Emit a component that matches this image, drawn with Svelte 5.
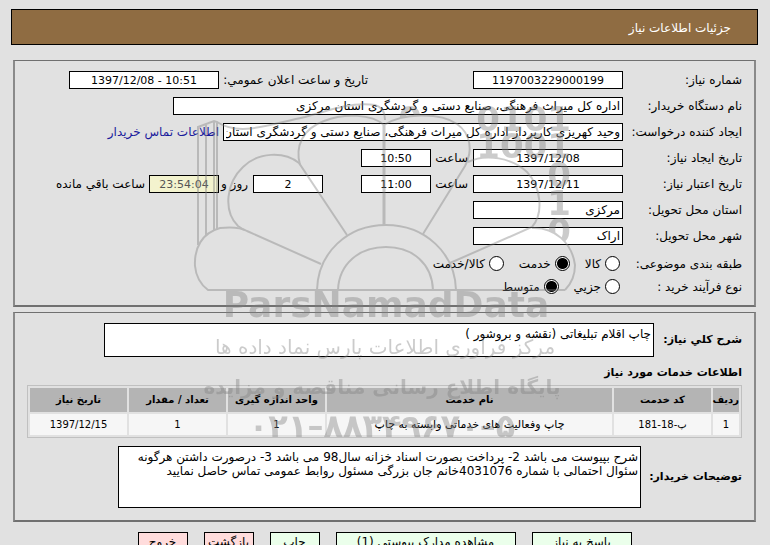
<script>
  const services = [
    { row: '1', code: 'پ-18-181', name: 'چاپ وفعاليت هاى خدماتى وابسته به چاپ', unit: '1', count: '1', date: '1397/12/15' }
  ];
  const actions = [
    { text: 'پاسخ به نیاز', size: 'wide', tone: 'go' },
    { text: 'مشاهده مدارک پیوستی (1)', size: 'widest', tone: 'go' },
    { text: 'چاپ', size: 'small', tone: 'go' },
    { text: 'بازگشت', size: 'small', tone: 'stop' },
    { text: 'خروج', size: 'small', tone: 'stop' }
  ];
  const description = 'چاپ اقلام تبلیغاتی (نقشه و بروشور )';
  const notes =
    'شرح بپیوست می باشد 2- پرداخت بصورت اسناد خزانه سال98 می باشد 3- درصورت داشتن هرگونه سئوال احتمالی با شماره 4031076خانم جان بزرگی مسئول روابط عمومی تماس حاصل نمایید';
  let category = $state('service');
  let process = $state('medium');
</script>

<main dir="rtl" lang="fa">
  <h1>جزئیات اطلاعات نیاز</h1>

  <fieldset class="details">
    <div class="row">
      <label class="name" for="number">شماره نیاز:</label>
      <input id="number" class="mid code" value="1197003229000199" readonly />
      <label class="announce" for="announced">تاریخ و ساعت اعلان عمومي:</label>
      <input id="announced" class="mid code" dir="ltr" value="1397/12/08 - 10:51" readonly />
    </div>
    <div class="row">
      <label class="name" for="buyer">نام دستگاه خریدار:</label>
      <input id="buyer" class="longest" value="اداره کل میراث فرهنگی، صنایع دستی و گردشگری استان مرکزی" readonly />
    </div>
    <div class="row">
      <label class="name" for="creator">ایجاد کننده درخواست:</label>
      <input id="creator" class="long" value="وحید کهریزی کارپرداز اداره کل میراث فرهنگی، صنایع دستی و گردشگری استان" readonly />
      <a href="#contact">اطلاعات تماس خریدار</a>
    </div>
    <div class="row">
      <label class="name" for="created">تاریخ ایجاد نیاز:</label>
      <input id="created" class="mid code" value="1397/12/08" readonly />
      <label class="hour" for="created-hour">ساعت</label>
      <input id="created-hour" class="short code" value="10:50" readonly />
    </div>
    <div class="row">
      <label class="name" for="valid">تاریخ اعتبار نیاز:</label>
      <input id="valid" class="mid code" value="1397/12/11" readonly />
      <label class="hour" for="valid-hour">ساعت</label>
      <input id="valid-hour" class="short code" value="11:00" readonly />
      <input id="days" class="short code days" value="2" readonly />
      <label class="day" for="days">روز و</label>
      <input id="remaining" class="short code countdown" value="23:54:04" readonly />
      <label for="remaining">ساعت باقي مانده</label>
    </div>
    <div class="row">
      <label class="name" for="province">استان محل تحویل:</label>
      <input id="province" class="mid" value="مرکزی" readonly />
    </div>
    <div class="row">
      <label class="name" for="city">شهر محل تحویل:</label>
      <input id="city" class="mid" value="اراک" readonly />
    </div>
    <div class="choices" role="radiogroup" aria-labelledby="category">
      <span class="name" id="category">طبقه بندی موضوعی:</span>
      <label><input type="radio" value="goods" bind:group={category} />کالا</label>
      <label><input type="radio" value="service" bind:group={category} />خدمت</label>
      <label><input type="radio" value="both" bind:group={category} />کالا/خدمت</label>
    </div>
    <div class="choices" role="radiogroup" aria-labelledby="process">
      <span class="name" id="process">نوع فرآیند خرید :</span>
      <label><input type="radio" value="small" bind:group={process} />جزیي</label>
      <label><input type="radio" value="medium" bind:group={process} />متوسط</label>
    </div>
  </fieldset>

  <fieldset class="request">
    <div class="area">
      <label class="summary" for="description">شرح کلي نیاز:</label>
      <textarea id="description" readonly value={description}></textarea>
    </div>
    <h2>اطلاعات خدمات مورد نیاز</h2>
    <table>
      <thead>
        <tr>
          <th class="c-row">ردیف</th>
          <th class="c-std">کد خدمت</th>
          <th>نام خدمت</th>
          <th class="c-std">واحد اندازه گیری</th>
          <th class="c-std">تعداد / مقدار</th>
          <th class="c-std">تاریخ نیاز</th>
        </tr>
      </thead>
      <tbody>
        {#each services as s}
          <tr>
            <td>{s.row}</td>
            <td>{s.code}</td>
            <td class="service">{s.name}</td>
            <td>{s.unit}</td>
            <td>{s.count}</td>
            <td>{s.date}</td>
          </tr>
        {/each}
      </tbody>
    </table>
    <div class="area">
      <label class="remarks" for="notes">توضیحات خریدار:</label>
      <textarea id="notes" class="tall" readonly value={notes}></textarea>
    </div>
  </fieldset>

  <div class="actions">
    {#each actions as a}
      <button type="button" class="{a.size} {a.tone}">{a.text}</button>
    {/each}
  </div>

  <svg class="watermark" viewBox="185 90 400 360" direction="ltr" aria-hidden="true">
    <mask id="behind-petals" maskUnits="userSpaceOnUse" x="185" y="90" width="400" height="360">
      <rect x="185" y="90" width="400" height="360" fill="#fff" />
      <path
        fill="#000"
        d="M384 290V125C402 113 440 112 457 124C471 134 473 151 465 166C486 153 512 158 527 172C541 187 544 213 532 228C555 227 572 243 575 265C576 276 571 284 565 290ZM384 125C372 114 344 113 324 121L300 165V290H384Z"
      />
    </mask>
    <g class="digits" mask="url(#behind-petals)">
      <text x="422" y="131">0</text>
      <text x="571" y="131">0101</text>
      <text x="571" y="158">1001</text>
      <text x="571" y="187">0</text>
      <text x="571" y="215">1</text>
      <text x="571" y="243">0</text>
    </g>
    <g class="lines">
      <path d="M198 245V127L214 121L217 122V230M206 236V124M214 231V121M217 122C240 137 270 124 305 117C335 108 355 102 375 105C382 107 385 113 385 120" />
      <path d="M321 264L247 231C240 227 230 227 220 228C202 233 194 248 195 266C196 277 200 284 208 290H565" />
      <path d="M347 235L299 163C284 151 258 152 243 167C226 183 223 211 238 226L244 230" />
      <path class="spine" d="M384 225V124" />
      <path d="M384 125C372 114 344 113 324 121C302 129 295 147 300 165" />
      <path d="M384 125C402 113 440 112 457 124C471 134 473 151 465 166L423 234" />
      <path d="M468 162C486 153 512 158 527 172C541 187 544 213 532 227L450 263" />
      <path d="M532 228C555 227 572 243 575 265C575 276 571 284 565 290" />
      <path d="M317 290C318 253 347 225 386 225C425 225 455 253 456 290M338 290C339 264 359 247 386 247C413 247 432 264 433 290" />
    </g>
    <text class="brand" x="386" y="317">ParsNamadData</text>
    <text class="script" x="385" y="354">مرکز فرآوری اطلاعات پارس نماد داده ها</text>
    <text class="tagline" x="382" y="394">پایگاه اطلاع رسانی مناقصه و مزایده</text>
    <text class="phone" x="382" y="437">۰۲۱–۸۸۳۴۹۶۷۰–۵</text>
  </svg>
</main>

<style>
  :global(html) {
    background: #e1e1e1;
    scrollbar-width: none;
  }
  :global(body) {
    margin: 0;
  }
  main,
  input,
  textarea,
  button {
    font-family: 'DejaVu Sans', Tahoma, sans-serif;
    font-size: 12px;
    line-height: 14px;
    color: #000;
  }
  main {
    position: relative;
    padding: 9px 12px 12px 11px;
    overflow: hidden;
  }
  h1 {
    margin: 0 0 15px;
    padding: 11px 26px 9px;
    border: 1px solid #000;
    background: #8f6c42;
    color: #fff;
    font-size: 12px;
    font-weight: normal;
    line-height: 14px;
  }
  fieldset {
    margin: 0 2px 5px;
    padding: 0 12px;
    min-width: 0;
    border: 2px solid;
    border-color: #707070 #8a8a8a #707070 #8a8a8a;
    border-width: 1px 2px 2px;
  }
  .details {
    padding-top: 10px;
    padding-bottom: 3px;
  }
  .row,
  .choices {
    display: flex;
    align-items: center;
    margin-bottom: 8px;
    white-space: nowrap;
  }
  .row {
    height: 18px;
  }
  .name {
    width: 119px;
    flex: none;
  }
  input {
    box-sizing: border-box;
    height: 18px;
    margin: 0;
    padding: 0 2px;
    border: 1px solid #000;
    border-radius: 0;
    background: #fff;
    flex: none;
  }
  .code {
    font-size: 11px;
    text-align: center;
    direction: ltr;
  }
  .short {
    width: 70px;
  }
  .mid {
    width: 150px;
  }
  .long {
    width: 400px;
  }
  .longest {
    width: 450px;
  }
  .announce {
    box-sizing: border-box;
    width: 254px;
    padding-right: 105px;
  }
  .hour {
    box-sizing: border-box;
    width: 42px;
    padding-right: 5px;
  }
  .days {
    margin-right: 38px;
  }
  .day {
    box-sizing: border-box;
    width: 34px;
    padding-right: 5px;
  }
  .countdown {
    margin-left: 4px;
    background: #f3f3ce;
    color: #555;
  }
  a {
    margin-right: 4px;
    color: #1a1a9c;
    text-decoration: none;
  }
  .choices {
    height: 15px;
  }
  .row + .choices {
    margin-top: 11px;
  }
  .choices label {
    display: flex;
    align-items: center;
    gap: 4px;
    margin-right: 3px;
    margin-left: 12px;
  }
  input[type='radio'] {
    appearance: none;
    width: 15px;
    height: 15px;
    padding: 0;
    border-radius: 50%;
  }
  input[type='radio']:checked {
    background: radial-gradient(circle, #000 5px, #fff 6px);
  }
  .request {
    padding-top: 10px;
    padding-bottom: 12px;
  }
  .area {
    display: flex;
    align-items: center;
    font-size: 11px;
    font-weight: bold;
  }
  .area label {
    flex: none;
    white-space: nowrap;
  }
  .summary {
    width: 88px;
  }
  .remarks {
    width: 101px;
  }
  textarea {
    box-sizing: border-box;
    width: 550px;
    height: 34px;
    margin: 0;
    padding: 3px 2px;
    border: 1px solid #000;
    border-radius: 0;
    background: #fff;
    resize: none;
    overflow: hidden;
  }
  textarea.tall {
    width: 523px;
    height: 62px;
  }
  h2 {
    margin: 9px 0 5px;
    font-size: 11px;
    line-height: 14px;
  }
  table {
    width: 100%;
    table-layout: fixed;
    margin-bottom: 8px;
    border: 1px solid #c0c0c0;
    border-spacing: 2px;
    font-size: 10px;
    line-height: 14px;
    text-align: center;
  }
  th {
    height: 24px;
    padding: 0;
    background: #b4b4b4;
    white-space: nowrap;
  }
  td {
    height: 21px;
    padding: 0;
    background: #f6f6f6;
  }
  .service {
    font-size: 11px;
  }
  .c-row {
    width: 26px;
  }
  .c-std {
    width: 97px;
  }
  .actions {
    display: flex;
    justify-content: center;
    gap: 16px;
    margin-top: 10px;
  }
  button {
    height: 20px;
    padding: 0;
    border: 1px solid #000;
    white-space: nowrap;
  }
  .wide {
    width: 100px;
  }
  .widest {
    width: 180px;
  }
  .small {
    width: 50px;
  }
  .go {
    background: #ebffeb;
  }
  .stop {
    background: #ffdcdc;
  }
  .watermark {
    position: absolute;
    top: 90px;
    left: 50%;
    width: 400px;
    height: 360px;
    margin-left: -200px;
    opacity: 0.4;
    pointer-events: none;
    fill: #808080;
    font-family: 'DejaVu Sans', sans-serif;
    font-weight: bold;
    text-anchor: middle;
  }
  .lines {
    fill: none;
    stroke: #808080;
    stroke-width: 2;
  }
  .spine {
    stroke-width: 3;
  }
  .digits {
    font-size: 34px;
    text-anchor: end;
  }
  .brand {
    font-size: 36px;
  }
  .script {
    font-size: 20px;
    font-weight: normal;
  }
  .tagline {
    font-size: 20px;
  }
  .phone {
    font-size: 32px;
  }
</style>
